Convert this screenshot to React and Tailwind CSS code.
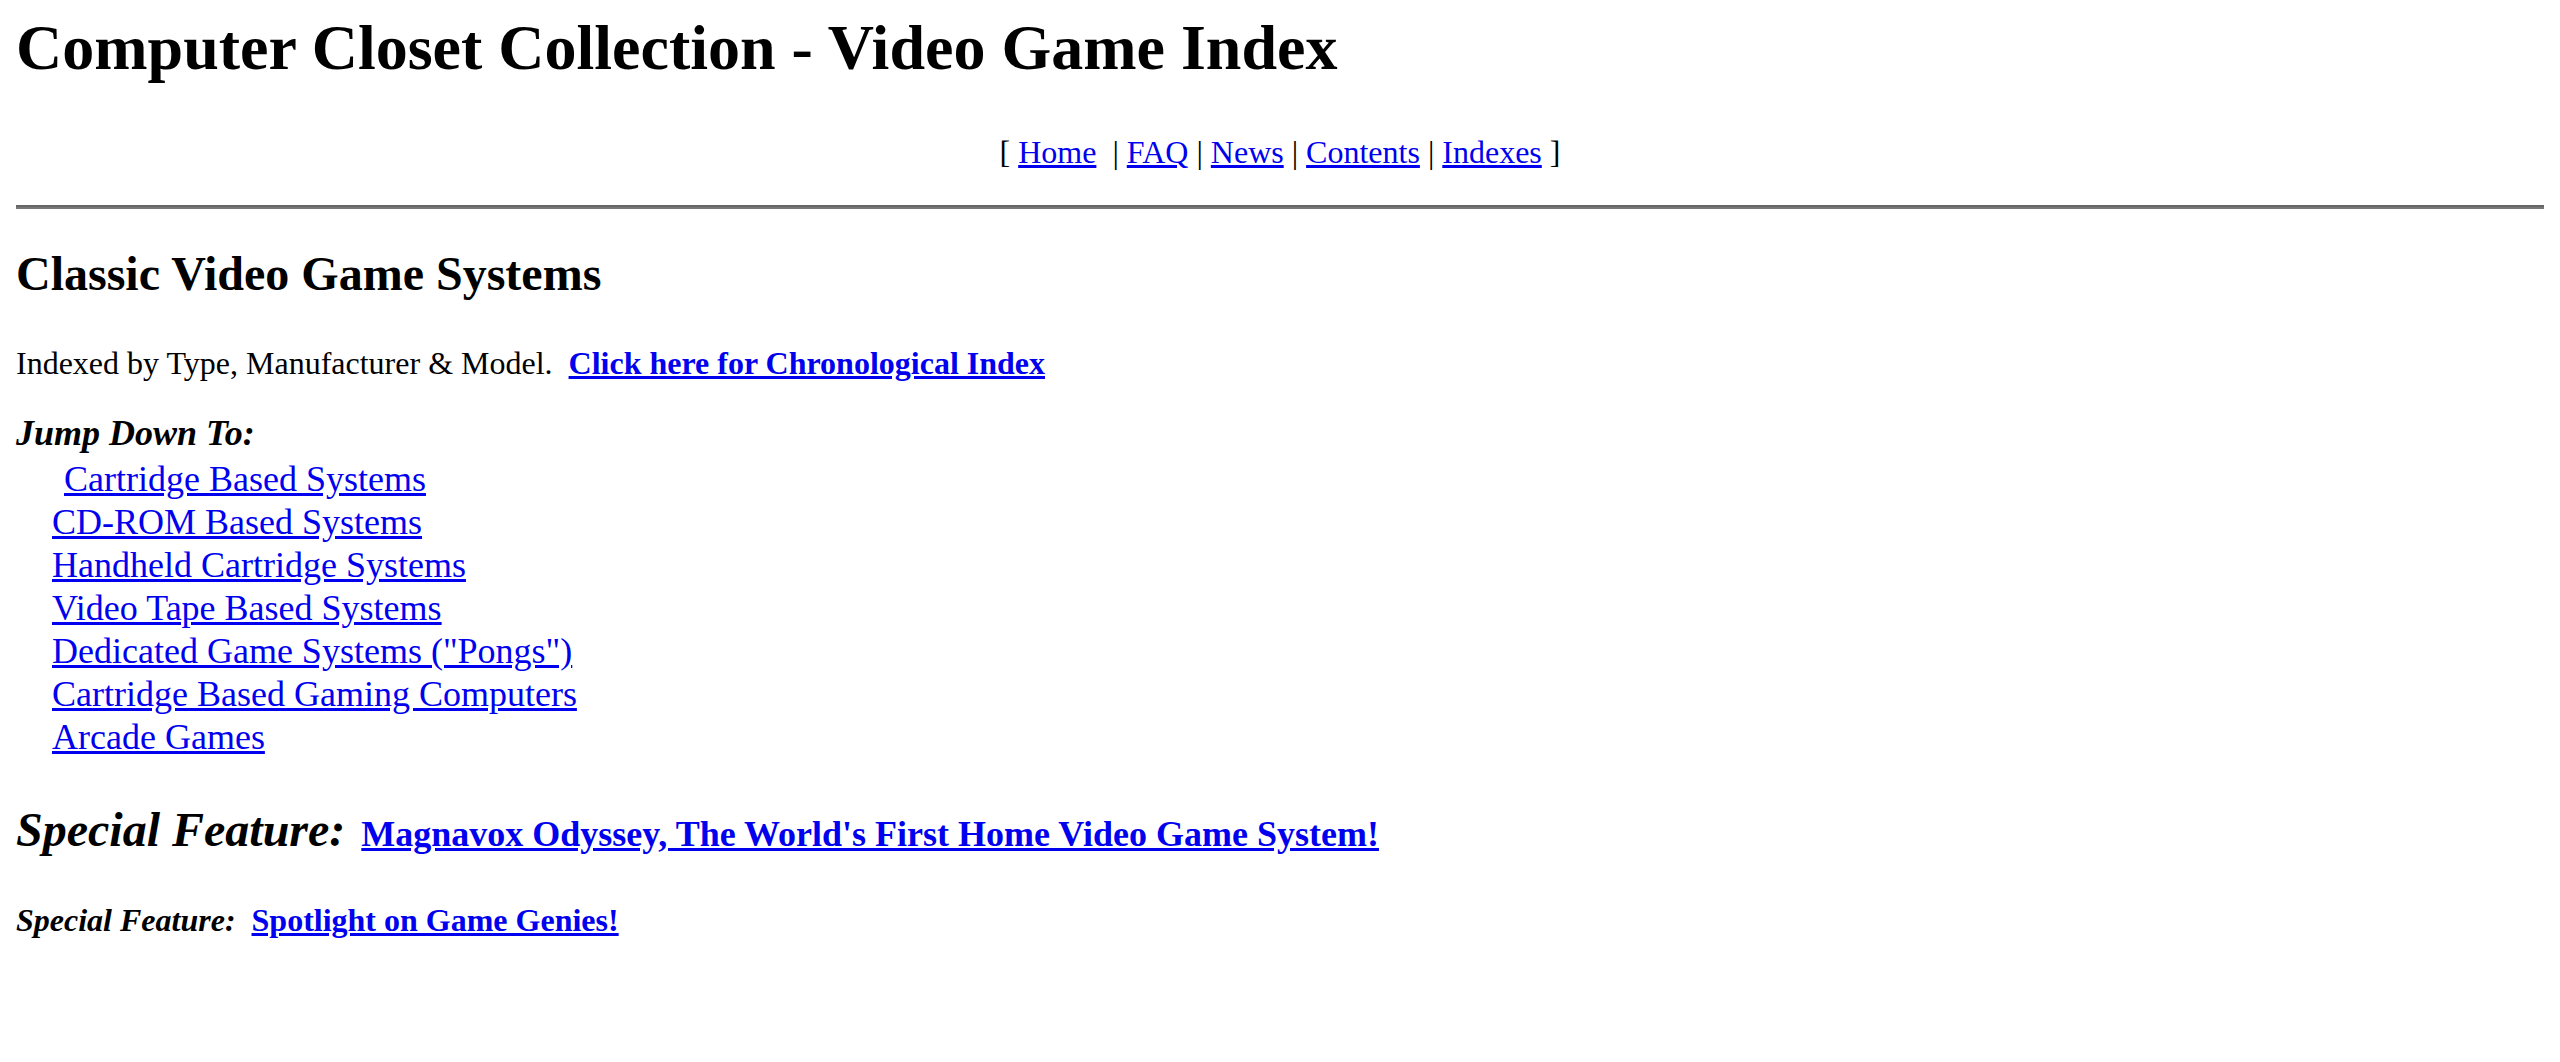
import React from 'react';

const linkCls = 'text-[#0000ee] underline';

const jumpLinks = [
  'Cartridge Based Systems',
  'CD-ROM Based Systems',
  'Handheld Cartridge Systems',
  'Video Tape Based Systems',
  'Dedicated Game Systems ("Pongs")',
  'Cartridge Based Gaming Computers',
  'Arcade Games',
];

const navLinks = ['FAQ', 'News', 'Contents', 'Indexes'];

const App = () => {
  return (
    <div className="min-h-screen bg-white px-4 text-black font-['Liberation_Serif','Times_New_Roman',serif]">
      {/* title */}
      <h1 className="pt-[11px] text-[64px] leading-[74px] font-bold whitespace-nowrap">
        Computer Closet Collection - Video Game Index
      </h1>

      {/* nav */}
      <div className="mt-[49px] text-center text-[32px] leading-[37px]">
        [ <a href="#" className={linkCls}>Home</a>
        {'\u00a0 | '}
        {navLinks.map((n, i) => (
          <React.Fragment key={n}>
            <a href="#" className={linkCls}>{n}</a>
            {i < navLinks.length - 1 ? ' | ' : ' ]'}
          </React.Fragment>
        ))}
      </div>

      <div className="mt-[34px] h-[4px] border-t-2 border-b-2 border-t-[#666666] border-b-[#777777]" />

      {/* systems */}
      <h2 className="mt-[37px] text-[48px] leading-[55px] font-bold">Classic Video Game Systems</h2>

      <p className="mt-[44px] text-[32px] leading-[37px]">
        Indexed by Type, Manufacturer &amp; Model.{'\u00a0 '}
        <a href="#" className={`${linkCls} font-bold`}>Click here for Chronological Index</a>
      </p>

      <div className="mt-[30px] text-[36px] leading-[43px]">
        <div className="mb-[3px] font-bold italic">Jump Down To:</div>
        <div className="flex flex-col items-start pl-[36px]">
          {jumpLinks.map((l, i) => (
            <a key={l} href="#" className={`${linkCls} ${i === 0 ? 'ml-[12px]' : ''}`}>
              {l}
            </a>
          ))}
        </div>
      </div>

      {/* features */}
      <div className="mt-[43px] text-[48px] leading-[55px] whitespace-nowrap">
        <span className="font-bold italic">Special Feature:</span>{' '}
        <a href="#" className={`${linkCls} ml-[4px] text-[36px] font-bold`}>
          Magnavox Odyssey, The World's First Home Video Game System!
        </a>
      </div>

      <div className="mt-[40px] text-[32px] leading-[37px] whitespace-nowrap">
        <span className="font-bold italic">Special Feature:</span>{'\u00a0 '}
        <a href="#" className={`${linkCls} font-bold`}>Spotlight on Game Genies!</a>
      </div>
    </div>
  );
};

export default App;
